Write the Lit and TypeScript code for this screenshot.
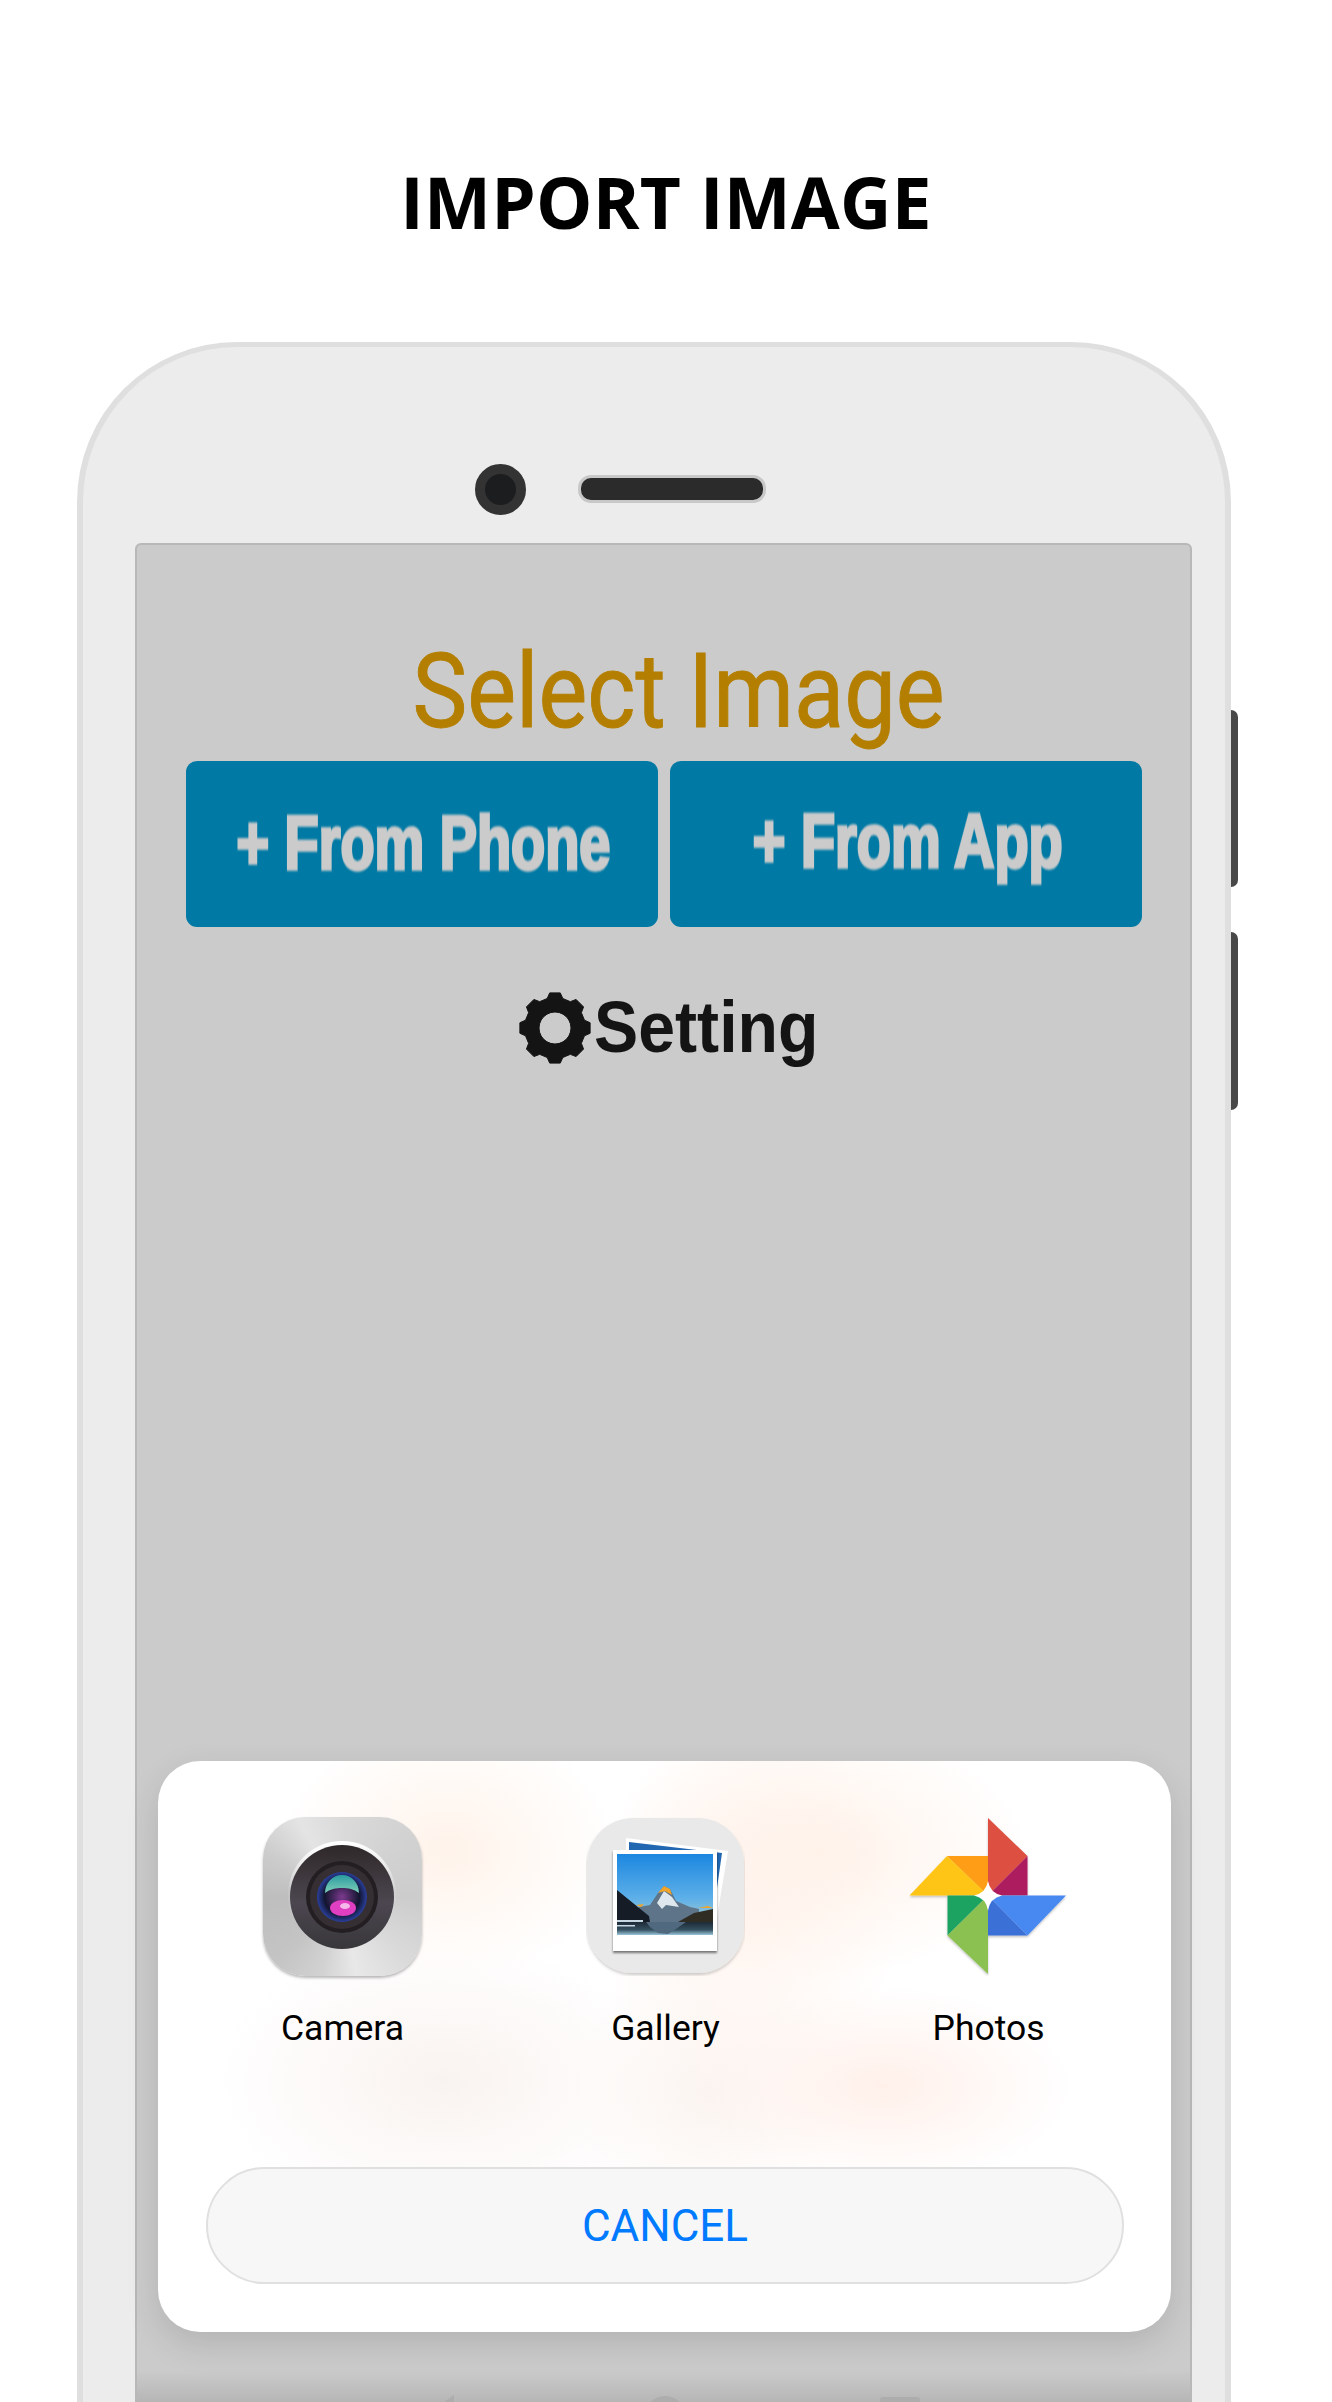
import { LitElement, html, css, svg } from "lit";
import { customElement } from "lit/decorators.js";

function gearPath(cx: number, cy: number, body: number, tip: number, hole: number, teeth: number): string {
  const pt = (r: number, a: number) => `${(cx + r * Math.sin(a)).toFixed(2)} ${(cy - r * Math.cos(a)).toFixed(2)}`;
  const step = (Math.PI * 2) / teeth;
  const parts: string[] = [];
  for (let i = 0; i < teeth; i++) {
    const a = i * step;
    parts.push(`${i === 0 ? "M" : "L"}${pt(body, a - step * 0.33)}`);
    parts.push(`L${pt(tip, a - step * 0.19)}`);
    parts.push(`L${pt(tip, a + step * 0.19)}`);
    parts.push(`L${pt(body, a + step * 0.33)}`);
  }
  parts.push("Z");
  parts.push(`M${cx} ${cy - hole}a${hole} ${hole} 0 1 0 .01 0Z`);
  return parts.join("");
}

const gear = svg`<svg class="gear" viewBox="0 0 72 74"><path fill="#141414" fill-rule="evenodd" stroke="#141414" stroke-width="1" stroke-linejoin="round" d=${gearPath(36, 37, 30.5, 35.5, 16, 8)}/></svg>`;

const cameraIcon = html`<div class="metal"><svg class="icon" viewBox="0 0 159 159">
<defs>
<radialGradient id="glass" cx=".5" cy=".5" r=".5">
<stop offset="0" stop-color="#7d3a8f"/><stop offset=".7" stop-color="#12152f"/><stop offset="1" stop-color="#2a3f9c"/>
</radialGradient>
<linearGradient id="ring" x1="0" y1="0" x2="0" y2="1"><stop offset="0" stop-color="#2e2829"/><stop offset=".55" stop-color="#4c4650"/><stop offset="1" stop-color="#38373a"/></linearGradient>
<linearGradient id="crest" x1="0" y1="0" x2="0" y2="1"><stop offset="0" stop-color="#fff"/><stop offset=".45" stop-color="#fff" stop-opacity=".1"/><stop offset="1" stop-color="#fff" stop-opacity="0"/></linearGradient>
<linearGradient id="dome" x1="0" y1="0" x2="0" y2="1"><stop offset="0" stop-color="#2a9aa0"/><stop offset="1" stop-color="#7fd0b8"/></linearGradient>
</defs>
<circle cx="79" cy="78" r="54" fill="url(#crest)"/>
<circle cx="79" cy="80" r="52" fill="url(#ring)"/>
<circle cx="79" cy="80" r="36" fill="#231e21"/>
<circle cx="79" cy="80" r="32" fill="#352f33"/>
<circle cx="79" cy="80" r="25" fill="url(#glass)"/>
<path d="M62 76a17 18 0 0 1 34 0c-5-4-11-5-17-5s-12 1-17 5z" fill="url(#dome)"/>
<ellipse cx="80" cy="91" rx="13" ry="8" fill="#df3fc0"/>
<ellipse cx="82" cy="89" rx="5" ry="3" fill="#f6b7ea"/>
</svg></div>`;

const galleryIcon = svg`<svg class="icon" viewBox="0 0 159 159">
<defs>
<linearGradient id="sky" x1="0" y1="0" x2="0" y2="1"><stop offset="0" stop-color="#1c87e0"/><stop offset=".55" stop-color="#5eb0e8"/><stop offset=".85" stop-color="#a8cdd0"/></linearGradient>
<linearGradient id="lake" x1="0" y1="0" x2="0" y2="1"><stop offset="0" stop-color="#1d2a36"/><stop offset=".6" stop-color="#35505f"/><stop offset="1" stop-color="#9cc6dc"/></linearGradient>
<filter id="sg" x="-10%" y="-10%" width="120%" height="125%"><feDropShadow dx="0" dy="2" stdDeviation="1.500" flood-color="#000" flood-opacity=".2"/></filter>
<filter id="ph" x="-10%" y="-10%" width="120%" height="125%"><feDropShadow dx="0" dy="2" stdDeviation="1.200" flood-color="#000" flood-opacity=".5"/></filter>
</defs>
<rect x="1" y="1" width="157" height="155" rx="46" fill="#e9e9e9" filter="url(#sg)"/>
<path d="M40 21l102 13-11 66H40z" fill="#fff"/>
<path d="M43 25l93 11-7 49H43z" fill="#2166b0"/>
<rect x="27" y="33" width="104" height="101" fill="#fff" filter="url(#ph)"/>
<rect x="31" y="37" width="96" height="81" fill="url(#sky)"/>
<path d="M53 90l11-2 8-12 6-7 6 3 6 12 14 6 9 2v13H53z" fill="#5e7488"/>
<path d="M71 86l7-12 8 6 7 10-13-2-4 4z" fill="#dfe7ee"/>
<path d="M72 76l6-7 6 3 2 6-7-4z" fill="#f0a428"/>
<path d="M50 88l8-1-3 3zM112 91l10-2 5 2z" fill="#f0a428"/>
<path d="M31 73l11 9 21 17 1 6H31z" fill="#151c26"/>
<path d="M92 105l16-9 19-4v15H92z" fill="#2f2c24"/>
<rect x="31" y="105" width="96" height="13" fill="url(#lake)"/>
<path d="M60 105h40l-10 7-8 5-10-1-8-6z" fill="#51697f"/>
<path d="M31 103h26v2H31zM31 108h18v1.500H31z" fill="#c5d8e2"/>
</svg>`;

const photosIcon = svg`<svg class="icon photos" viewBox="28 19 159 159">
<defs><filter id="sp" x="-10%" y="-10%" width="120%" height="120%"><feDropShadow dx="0" dy="1.500" stdDeviation="1" flood-color="#000" flood-opacity=".25"/></filter></defs>
<g filter="url(#sp)">
<path d="M107 20l39.500 38-39.500 39.500z" fill="#dd4f3f"/>
<path d="M146.500 58v39.500h-39.500z" fill="#ad1d5f"/>
<path d="M66 58h41v39.500z" fill="#ff9e12"/>
<path d="M28.500 97.500L66 58l41 39.500z" fill="#ffc517"/>
<path d="M66.500 97.500H107L66.500 137.500z" fill="#1ea362"/>
<path d="M66.500 137.500L107 97.500V176z" fill="#8bc151"/>
<path d="M107 97.500l39.500 40H107z" fill="#3b6fd6"/>
<path d="M107 97.500h78l-38.500 40z" fill="#4688f1"/>
</g>
<path d="M107 83q2 12 14 14.500q-12 2.500-14 15q-2-12.500-14-15q12-2.500 14-14.500z" fill="#fff"/>
</svg>`;

@customElement("app-root")
export class AppRoot extends LitElement {
  static styles = css`
    :host { display: block; height: 2402px; overflow: hidden; background: #fff; }
    .title { margin: 0; padding: 160px 0 98px; text-align: center; font: 700 71px/84px "Open Sans", sans-serif; color: #000; letter-spacing: .25px; }
    .phone { position: relative; box-sizing: border-box; margin-left: 77px; width: 1154px; height: 2240px; background: #ececec; border: solid #dfdfdf; border-width: 5px 6px; border-radius: 160px 160px 0 0; padding: 0 33px 0 52px; }
    .side { position: absolute; left: 100%; margin-left: 6px; width: 7px; height: 177px; background: #484848; border-radius: 0 8px 8px 0; }
    .side.a { top: 363px; }
    .side.b { top: 585px; height: 178px; }
    .top { box-sizing: border-box; display: flex; align-items: center; height: 196px; padding-top: 88px; }
    .cam { box-sizing: border-box; width: 51px; height: 51px; margin-left: 340px; border-radius: 50%; background: #1c1d1f; border: 10px solid #333; }
    .speaker { box-sizing: border-box; width: 188px; height: 28px; margin-left: 52px; background: #2b2b2b; border: 3px solid #c8c8c8; border-radius: 13px; }
    .screen { position: relative; box-sizing: border-box; height: 1900px; background: #cbcbcb; border: 2px solid #b8b8b8; border-radius: 6px 6px 0 0; display: flex; flex-direction: column; align-items: center; }
    .heading { margin: 88px 0 0 30px; font: 400 104px/118px Roboto, sans-serif; -webkit-text-stroke: 1px #b47f00; color: #b47f00; transform: scaleX(.885); white-space: nowrap; }
    .buttons { display: flex; gap: 12px; margin-top: 10px; }
    .btn { width: 472px; height: 166px; background: #007aa5; border-radius: 11px; display: flex; align-items: center; justify-content: center; color: #cbcbcb; }
    .btn span { display: block; font: 700 76px/1 "Liberation Sans", sans-serif; -webkit-text-stroke: 3.500px #cbcbcb; white-space: nowrap; transform: scaleX(.735); filter: blur(.8px); }
    .btn.one span { margin: -2px 0 0 4px; }
    .btn.two span { margin: -6px 0 0 4px; }
    .setting { display: flex; align-items: center; margin-top: 63px; margin-left: 30px; color: #141414; font: 700 72px/75px "Liberation Sans", sans-serif; }
    .setting span { transform: scaleX(.92); transform-origin: left center; margin-left: 3px; }
    .gear { width: 72px; height: 74px; display: block; }
    .sheet { position: absolute; left: 21px; top: 1216px; width: 1013px; height: 571px; box-sizing: border-box; padding: 56px 47px 0 48px; border-radius: 42px; display: flex; flex-direction: column; box-shadow: 0 12px 34px rgba(0,0,0,.12);
      background:
        radial-gradient(ellipse 170px 130px at 290px 90px, #fff3ea, transparent),
        radial-gradient(ellipse 210px 130px at 660px 90px, #fff2e9, transparent),
        radial-gradient(ellipse 150px 210px at 590px 150px, #fff5ef, transparent),
        radial-gradient(ellipse 190px 100px at 725px 325px, #fff0ea, transparent),
        radial-gradient(ellipse 230px 140px at 285px 320px, #f9f3f0, transparent),
        radial-gradient(ellipse 140px 140px at 550px 330px, #fbf4f0, transparent),
        #fff;
    }
    .apps { display: flex; justify-content: space-between; padding: 0 56px 0 57px; }
    .app { width: 159px; display: flex; flex-direction: column; align-items: center; }
    .icon { display: block; width: 159px; height: 159px; }
    .metal { width: 159px; height: 159px; border-radius: 42px; box-shadow: 0 2px 3px rgba(0,0,0,.28);
      background: conic-gradient(#dadada, #d2d2d2 45deg, #cccccc 90deg, #dadada 135deg, #e8e8e8 170deg, #d2d2d2 195deg, #c4c4c4 225deg, #bebebe 270deg, #cccccc 300deg, #e4e4e4 330deg, #dadada); }
    .app span { margin-top: 32px; font: 400 35.500px/40px Roboto, sans-serif; color: #000; white-space: nowrap; }
    .cancel { box-sizing: border-box; margin-top: 119px; height: 117px; border: 2px solid #e0e0e0; border-radius: 59px; background: #f7f7f7; color: #007aff; font: 400 44px/115px Roboto, sans-serif; text-align: center; }
    .shade { position: absolute; left: 0; right: 0; top: 1825px; height: 32px; background: linear-gradient(#cbcbcb, #b6b6b6); }
    .nav { position: absolute; left: 0; right: 0; top: 1850px; display: flex; padding-left: 281px; }
    .nav svg { display: block; width: 50px; height: 50px; flex: none; }
    .nav svg + svg { margin-left: 172px; }
    .nav svg + svg + svg { margin-left: 185px; }
  `;

  render() {
    return html`
      <h1 class="title">IMPORT IMAGE</h1>
      <div class="phone">
        <div class="side a"></div>
        <div class="side b"></div>
        <div class="top">
          <div class="cam"></div>
          <div class="speaker"></div>
        </div>
        <div class="screen">
          <div class="heading">Select Image</div>
          <div class="buttons">
            <div class="btn one"><span>+ From Phone</span></div>
            <div class="btn two"><span>+ From App</span></div>
          </div>
          <div class="setting">${gear}<span>Setting</span></div>
          <div class="shade"></div>
          <div class="nav">
            <svg viewBox="0 0 50 50"><path d="M36 0v44L6 22z" fill="#adadad"/></svg>
            <svg viewBox="0 0 50 50"><circle cx="25" cy="21" r="20" fill="#adadad"/></svg>
            <svg viewBox="0 0 50 50"><rect x="5" y="2" width="40" height="40" rx="3" fill="#adadad"/></svg>
          </div>
          <div class="sheet">
            <div class="apps">
              <div class="app">${cameraIcon}<span>Camera</span></div>
              <div class="app">${galleryIcon}<span>Gallery</span></div>
              <div class="app">${photosIcon}<span>Photos</span></div>
            </div>
            <div class="cancel">CANCEL</div>
          </div>
        </div>
      </div>
    `;
  }
}
